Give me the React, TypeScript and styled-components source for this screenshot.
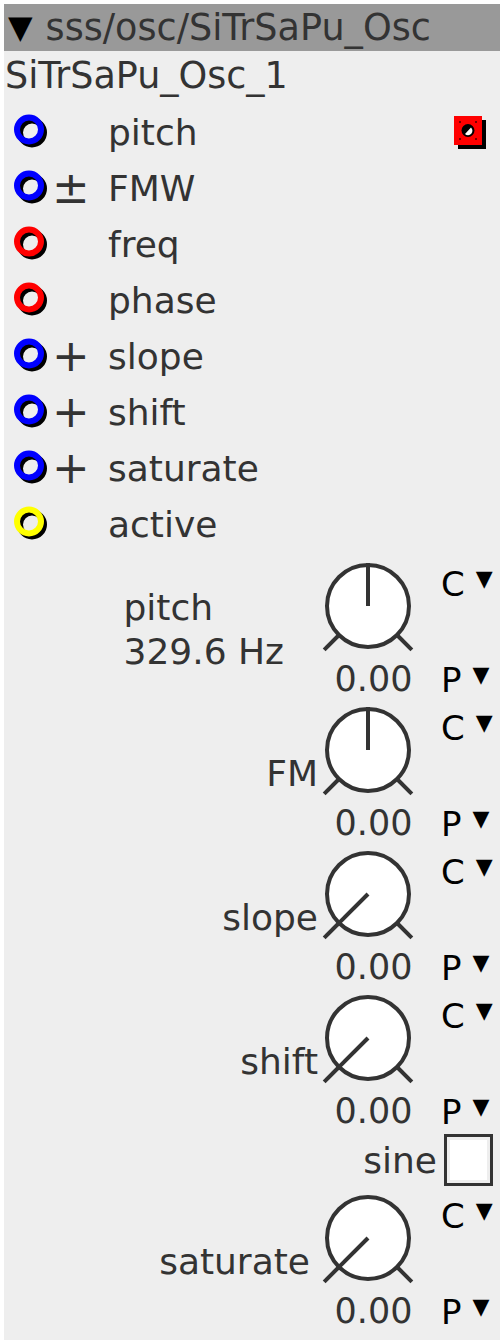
import React, { FunctionComponent } from 'react';
import styled, { createGlobalStyle } from 'styled-components';

const Global = createGlobalStyle`
  html, body {
    margin: 0;
    padding: 0;
    background: #ffffff;
  }
  body {
    font-family: 'DejaVu Sans', 'Liberation Sans', sans-serif;
    color: #333333;
  }
`;

interface PortProps {
  color: string;
  sign?: string;
  label: string;
  output?: boolean;
}

const PortDot: FunctionComponent<{ color: string }> = ({ color }) => (
  <svg width="36" height="36" viewBox="0 0 36 36">
    <circle cx="18" cy="18.5" r="12" fill="none" stroke="#000" strokeWidth="6" />
    <circle cx="15" cy="15.5" r="12" fill="none" stroke={color} strokeWidth="6" />
  </svg>
);

const OutPort = () => (
  <svg width="34" height="34" viewBox="0 0 34 34">
    <rect x="5" y="5" width="28" height="29" fill="#000" />
    <rect x="1" y="1" width="28" height="29" fill="#ff0000" />
    <circle cx="15" cy="15.5" r="6.5" fill="#000" />
    <path d="M12 19 L18 12.5 A4 4 0 0 1 12 19 Z" fill="#fff" />
    <g fill="#700">
      <rect x="6" y="6" width="2" height="2" />
      <rect x="22" y="6" width="2" height="2" />
      <rect x="6" y="23" width="2" height="2" />
      <rect x="22" y="23" width="2" height="2" />
    </g>
  </svg>
);

const Port: FunctionComponent<PortProps> = props => (
  <PortRow>
    <PortDot color={props.color} />
    <Sign>{props.sign}</Sign>
    <span>{props.label}</span>
    <div>{props.output && <OutPort />}</div>
  </PortRow>
);

interface KnobProps {
  label: string;
  sub?: string;
  value: string;
  angle: number;
  pad?: number;
}

const KnobDial: FunctionComponent<{ angle: number }> = ({ angle }) => {
  const cx = 48;
  const cy = 47;
  const r = 41;
  const rad = (angle * Math.PI) / 180;
  const px = cx + Math.sin(rad) * (r + 2);
  const py = cy - Math.cos(rad) * (r + 2);
  const foot = (a: number) => {
    const t = (a * Math.PI) / 180;
    return {
      x1: cx + Math.sin(t) * r,
      y1: cy - Math.cos(t) * r,
      x2: cx + Math.sin(t) * (r + 21),
      y2: cy - Math.cos(t) * (r + 21),
    };
  };
  const left = foot(-135);
  const right = foot(135);
  return (
    <svg width="96" height="96" viewBox="0 0 96 96">
      <circle cx={cx} cy={cy} r={r} fill="#fff" stroke="#333" strokeWidth="4" />
      <line {...left} stroke="#333" strokeWidth="4" />
      <line {...right} stroke="#333" strokeWidth="4" />
      <line x1={cx} y1={cy} x2={px} y2={py} stroke="#333" strokeWidth="4" />
    </svg>
  );
};

const Knob: FunctionComponent<KnobProps> = props => (
  <KnobBlock>
    <KnobLabel $pad={props.pad ?? 2} $left={!!props.sub}>
      <div>{props.label}</div>
      {props.sub && <div>{props.sub}</div>}
    </KnobLabel>
    <KnobCol>
      <KnobDial angle={props.angle} />
      <Value>{props.value}</Value>
    </KnobCol>
    <ModeCol>
      <Mode>
        C<Arrow>▼</Arrow>
      </Mode>
      <Mode>
        P<Arrow>▼</Arrow>
      </Mode>
    </ModeCol>
  </KnobBlock>
);

const App = () => (
  <>
    <Global />
    <Panel>
      <Header>
        <HeadArrow>▼</HeadArrow>
        <span>sss/osc/SiTrSaPu_Osc</span>
      </Header>
      <Instance>SiTrSaPu_Osc_1</Instance>
      <Ports>
        <Port color="#0000ff" label="pitch" output />
        <Port color="#0000ff" sign="±" label="FMW" />
        <Port color="#ff0000" label="freq" />
        <Port color="#ff0000" label="phase" />
        <Port color="#0000ff" sign="+" label="slope" />
        <Port color="#0000ff" sign="+" label="shift" />
        <Port color="#0000ff" sign="+" label="saturate" />
        <Port color="#ffff00" label="active" />
      </Ports>
      <Knob label="pitch" sub="329.6 Hz" value="0.00" angle={0} pad={36} />
      <Knob label="FM" value="0.00" angle={0} />
      <Knob label="slope" value="0.00" angle={-135} />
      <Knob label="shift" value="0.00" angle={-135} />
      <ToggleRow>
        <span>sine</span>
        <CheckBox />
      </ToggleRow>
      <Knob label="saturate" value="0.00" angle={-135} pad={10} />
    </Panel>
  </>
);

const Panel = styled.div`
  margin: 4px;
  width: 496px;
  background: #eeeeee;
  padding-bottom: 8px;
  font-size: 36px;
`;

const Header = styled.div`
  height: 47px;
  display: flex;
  align-items: center;
  gap: 13px;
  background: #999999;
  padding-left: 4px;
  font-size: 36.6px;
  line-height: 47px;
  white-space: nowrap;
  overflow: hidden;
`;

const HeadArrow = styled.span`
  color: #000;
  font-size: 32px;
`;

const Instance = styled.div`
  height: 53px;
  line-height: 50px;
  padding-left: 1px;
  font-size: 36.5px;
`;

const Ports = styled.div`
  display: flex;
  flex-direction: column;
  margin-bottom: 4px;
`;

const PortRow = styled.div`
  height: 56px;
  display: grid;
  grid-template-columns: 36px 58px 1fr auto;
  align-items: center;
  padding: 0 13px 0 10px;
  svg {
    display: block;
  }
`;

const Sign = styled.span`
  font-size: 45px;
  line-height: 46px;
  margin-left: 2px;
`;

const KnobBlock = styled.div`
  height: 144px;
  display: grid;
  grid-template-columns: 1fr 96px 64px;
  column-gap: 20px;
  align-items: center;
`;

const KnobLabel = styled.div<{ $pad: number; $left: boolean }>`
  justify-self: end;
  text-align: ${p => (p.$left ? 'left' : 'right')};
  margin-right: -20px;
  padding-right: ${p => p.$pad}px;
  padding-top: 4px;
  line-height: 44px;
`;

const KnobCol = styled.div`
  align-self: stretch;
  display: flex;
  flex-direction: column;
  align-items: center;
  padding-top: 3px;
  svg {
    display: block;
  }
`;

const Value = styled.div`
  margin-top: 5px;
  padding-left: 11px;
  font-size: 35px;
  line-height: 38px;
`;

const ModeCol = styled.div`
  align-self: stretch;
  display: flex;
  flex-direction: column;
  justify-content: space-between;
  padding: 9px 0 1px 5px;
`;

const Mode = styled.div`
  color: #000;
  font-size: 34px;
  line-height: 38px;
  display: flex;
  align-items: flex-start;
  gap: 11px;
`;

const Arrow = styled.span`
  font-size: 22px;
  line-height: 28px;
`;

const ToggleRow = styled.div`
  height: 56px;
  display: flex;
  align-items: center;
  justify-content: flex-end;
  gap: 7px;
  padding-right: 7px;
`;

const CheckBox = styled.div`
  width: 43px;
  height: 46px;
  background: #fff;
  border: 3px solid #333;
  box-shadow: inset 0 0 0 3px #eeeeee;
`;

export default App;
